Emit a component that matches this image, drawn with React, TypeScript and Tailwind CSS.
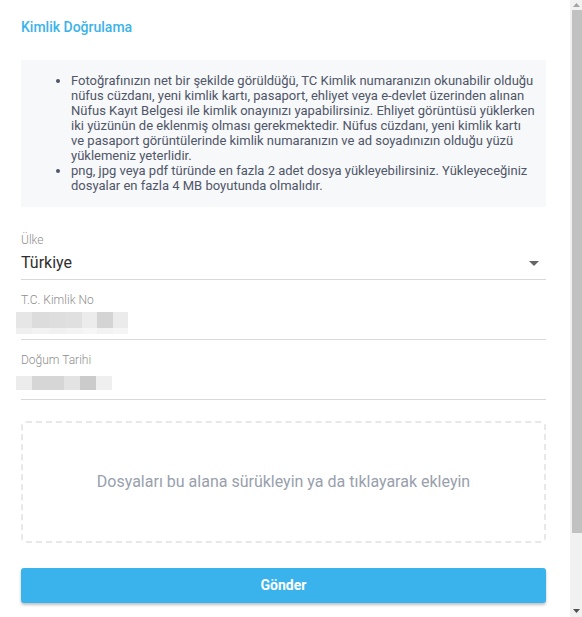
export default function App() {
  const firstBullet = [
    "Fotoğrafınızın net bir şekilde görüldüğü, TC Kimlik numaranızın okunabilir olduğu",
    "nüfus cüzdanı, yeni kimlik kartı, pasaport, ehliyet veya e-devlet üzerinden alınan",
    "Nüfus Kayıt Belgesi ile kimlik onayınızı yapabilirsiniz. Ehliyet görüntüsü yüklerken",
    "iki yüzünün de eklenmiş olması gerekmektedir. Nüfus cüzdanı, yeni kimlik kartı",
    "ve pasaport görüntülerinde kimlik numaranızın ve ad soyadınızın olduğu yüzü",
    "yüklemeniz yeterlidir.",
  ]
  const secondBullet = [
    "png, jpg veya pdf türünde en fazla 2 adet dosya yükleyebilirsiniz. Yükleyeceğiniz",
    "dosyalar en fazla 4 MB boyutunda olmalıdır.",
  ]

  return (
    <div className="flex h-[617px] w-full overflow-hidden bg-white font-['Roboto',sans-serif]">
      <main className="flex-1 pl-[21px] pr-[24px]">
        <h1 className="pt-[18px] text-[14px] leading-[18px] font-medium text-[#3bb3ea]">Kimlik Doğrulama</h1>

        {/* Info box */}
        <div className="mt-[24px] bg-[#f7f8fa] pt-[13px] pb-[14px] pl-[50px]">
          <ul className="list-disc text-[13px] leading-[15px] text-[#4f5668]">
            <li>
              {firstBullet.map((line) => (
                <span key={line} className="block whitespace-nowrap">{line}</span>
              ))}
            </li>
            <li>
              {secondBullet.map((line) => (
                <span key={line} className="block whitespace-nowrap">{line}</span>
              ))}
            </li>
          </ul>
        </div>

        {/* Country */}
        <div className="mt-[26px] border-b border-[#d9d9d9]">
          <label className="block text-[12px] leading-[14px] font-light text-[#8e8e8e]">Ülke</label>
          <div className="flex h-[32px] items-center justify-between">
            <span className="text-[16px] text-[#2f2f2f]">Türkiye</span>
            <svg width="10" height="5" viewBox="0 0 10 5" className="mr-[7px]">
              <path d="M0 0h10L5 5z" fill="#666" />
            </svg>
          </div>
        </div>

        {/* TC no */}
        <div className="mt-[13px] border-b border-[#d9d9d9]">
          <label className="block text-[12px] leading-[14px] font-light text-[#8e8e8e]">T.C. Kimlik No</label>
          <div className="h-[32px] pt-[5px]">
            <div className="-ml-[5px] flex h-[16px]">
              <div className="w-[16px] bg-[#e6e6e6]" />
              <div className="w-[18px] bg-[#dcdcdc]" />
              <div className="w-[16px] bg-[#dedede]" />
              <div className="w-[16px] bg-[#e0e0e0]" />
              <div className="w-[15px] bg-[#ececec]" />
              <div className="w-[16px] bg-[#d4d4d4]" />
              <div className="w-[15px] bg-[#ebebeb]" />
            </div>
            <div className="-ml-[5px] flex h-[6px]">
              <div className="w-[16px] bg-[#efefef]" />
              <div className="w-[18px] bg-[#f2f2f2]" />
              <div className="w-[16px] bg-[#f0f0f0]" />
              <div className="w-[16px] bg-[#f3f3f3]" />
              <div className="w-[15px] bg-[#f6f6f6]" />
              <div className="w-[16px] bg-[#f2f2f2]" />
              <div className="w-[15px] bg-[#f5f5f5]" />
            </div>
          </div>
        </div>

        {/* Birth date */}
        <div className="mt-[13px] border-b border-[#d9d9d9]">
          <label className="block text-[12px] leading-[14px] font-light text-[#8e8e8e]">Doğum Tarihi</label>
          <div className="h-[32px] pt-[9px]">
            <div className="-ml-[5px] flex h-[14px]">
              <div className="w-[16px] bg-[#ececec]" />
              <div className="w-[32px] bg-[#d6d6d6]" />
              <div className="w-[16px] bg-[#e3e3e3]" />
              <div className="w-[16px] bg-[#cbcbcb]" />
              <div className="w-[16px] bg-[#efefef]" />
            </div>
          </div>
        </div>

        {/* Drop zone */}
        <div className="mt-[21px] flex h-[122px] items-center justify-center rounded-[5px] border-2 border-dashed border-[#e8e8e8]">
          <span className="text-[16px] text-[#98a0ad]">Dosyaları bu alana sürükleyin ya da tıklayarak ekleyin</span>
        </div>

        <button className="mt-[25px] h-[35px] w-full rounded-[3px] bg-[#3ab2eb] text-[14px] font-bold text-white shadow-[0_2px_3px_rgba(0,0,0,0.25)]">
          Gönder
        </button>
      </main>

      {/* Scrollbar */}
      <div className="flex w-[12px] flex-col bg-[#f1f1f1]">
        <div className="flex h-[10px] items-center justify-center">
          <svg width="7" height="4" viewBox="0 0 7 4">
            <path d="M0 4h7L3.5 0z" fill="#a3a3a3" />
          </svg>
        </div>
        <div className="ml-[2px] h-[523px] bg-[#c1c1c1]" />
        <div className="flex-1" />
        <div className="flex h-[12px] items-center justify-center">
          <svg width="7" height="4" viewBox="0 0 7 4">
            <path d="M0 0h7L3.5 4z" fill="#505050" />
          </svg>
        </div>
      </div>
    </div>
  )
}
